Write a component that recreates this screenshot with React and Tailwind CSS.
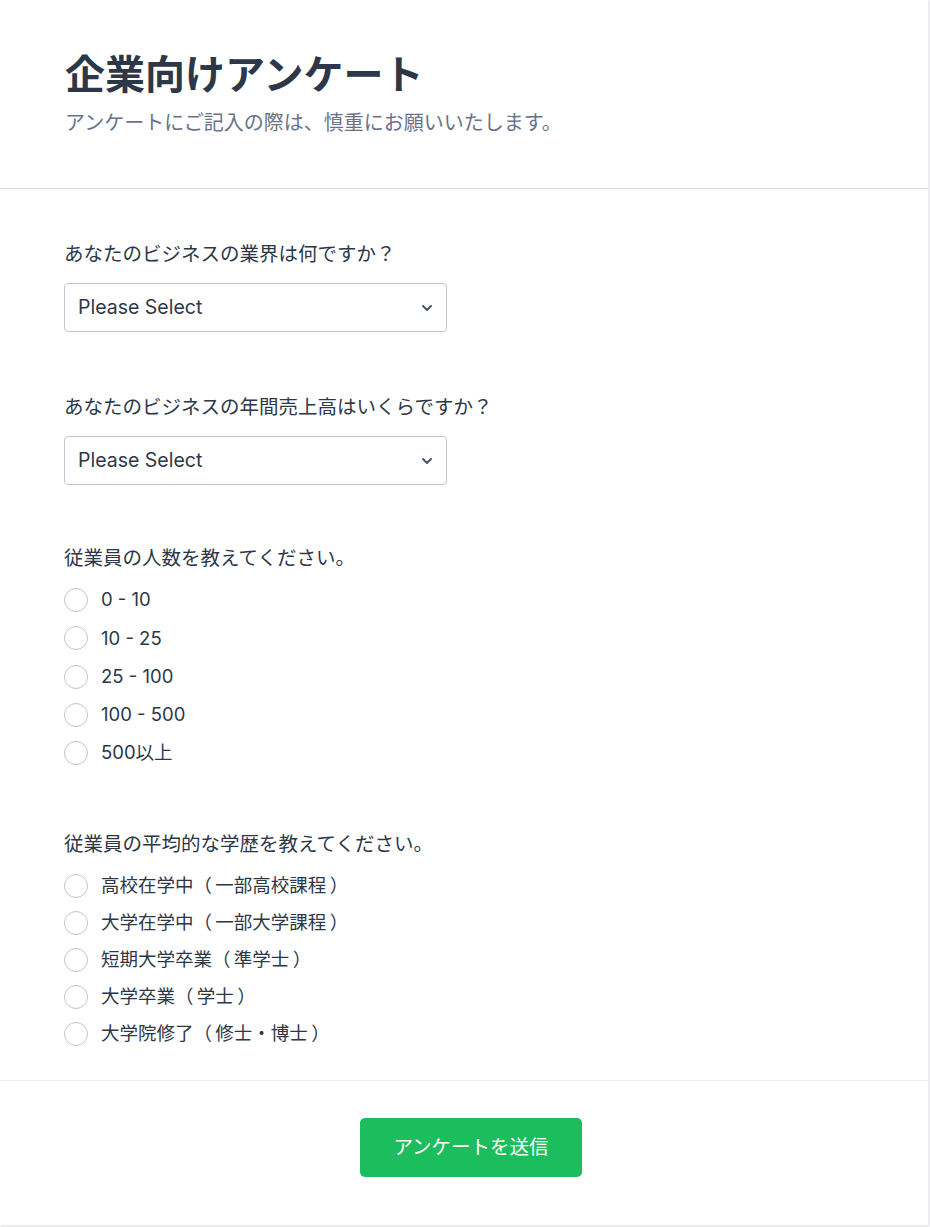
import { ChevronDown } from 'lucide-react';

const font = { fontFamily: 'Inter, "Noto Sans CJK JP", sans-serif' };

function SelectField({ label, top }) {
  return (
    <div className={top}>
      <label className="block text-[19.5px] leading-6 text-[#2d3748] mb-[17px]">{label}</label>
      <div className="relative w-[383px] h-[49px] border border-[#c3c6d4] rounded-[4px] bg-white flex items-center px-[13px]">
        <span className="text-[19.5px] text-[#2d3748]">Please Select</span>
        <ChevronDown className="absolute right-[11px] top-[16px] w-[16px] h-[16px] text-[#4a5568]" strokeWidth={3} />
      </div>
    </div>
  );
}

function RadioGroup({ label, options, top, rowH }) {
  return (
    <div className={top}>
      <label className="block text-[19.5px] leading-6 text-[#2d3748] mb-[11px]">{label}</label>
      <div className="flex flex-col">
        {options.map((o) => (
          <div key={o} className={`flex items-center ${rowH}`}>
            <span className="w-[24px] h-[24px] rounded-full border-[1.5px] border-[#bfc3cc] bg-white"></span>
            <span className="ml-[13px] text-[18.5px] text-[#2d3748]">{o}</span>
          </div>
        ))}
      </div>
    </div>
  );
}

export default function App() {
  return (
    <div style={font} className="min-h-[1227px] bg-[#f7f7fa]">
      <div className="w-[928px] bg-white shadow-[1px_1px_2px_rgba(0,0,0,0.08)]">
        {/* Header */}
        <div className="px-[65px] pt-[55px] pb-[51px] border-b border-[#dcdcea]">
          <h1 className="text-[40px] leading-10 font-bold text-[#2d3748]">企業向けアンケート</h1>
          <p className="mt-[14px] text-[20px] leading-7 text-[#68738a]">
            アンケートにご記入の際は、慎重にお願いいたします。
          </p>
        </div>

        {/* Questions */}
        <div className="px-[64px] pt-[53px] pb-[28px]">
          <SelectField label="あなたのビジネスの業界は何ですか？" top="" />
          <SelectField label="あなたのビジネスの年間売上高はいくらですか？" top="mt-[63px]" />
          <RadioGroup
            label="従業員の人数を教えてください。"
            top="mt-[61px]"
            rowH="h-[38.25px]"
            options={['0 - 10', '10 - 25', '25 - 100', '100 - 500', '500以上']}
          />
          <RadioGroup
            label="従業員の平均的な学歴を教えてください。"
            top="mt-[60px]"
            rowH="h-[37px]"
            options={[
              '高校在学中（\u2009一部高校課程\u2009）',
              '大学在学中（\u2009一部大学課程\u2009）',
              '短期大学卒業（\u2009準学士\u2009）',
              '大学卒業（\u2009学士\u2009）',
              '大学院修了（\u2009修士・博士\u2009）',
            ]}
          />
        </div>

        {/* Footer */}
        <div className="border-t border-[#ececf4] pt-[37px] pb-[48px] flex justify-center">
          <button className="ml-[14px] w-[222px] h-[59px] rounded-[5px] bg-[#1bbd5d] text-white text-[19.5px]">
            アンケートを送信
          </button>
        </div>
      </div>
    </div>
  );
}
